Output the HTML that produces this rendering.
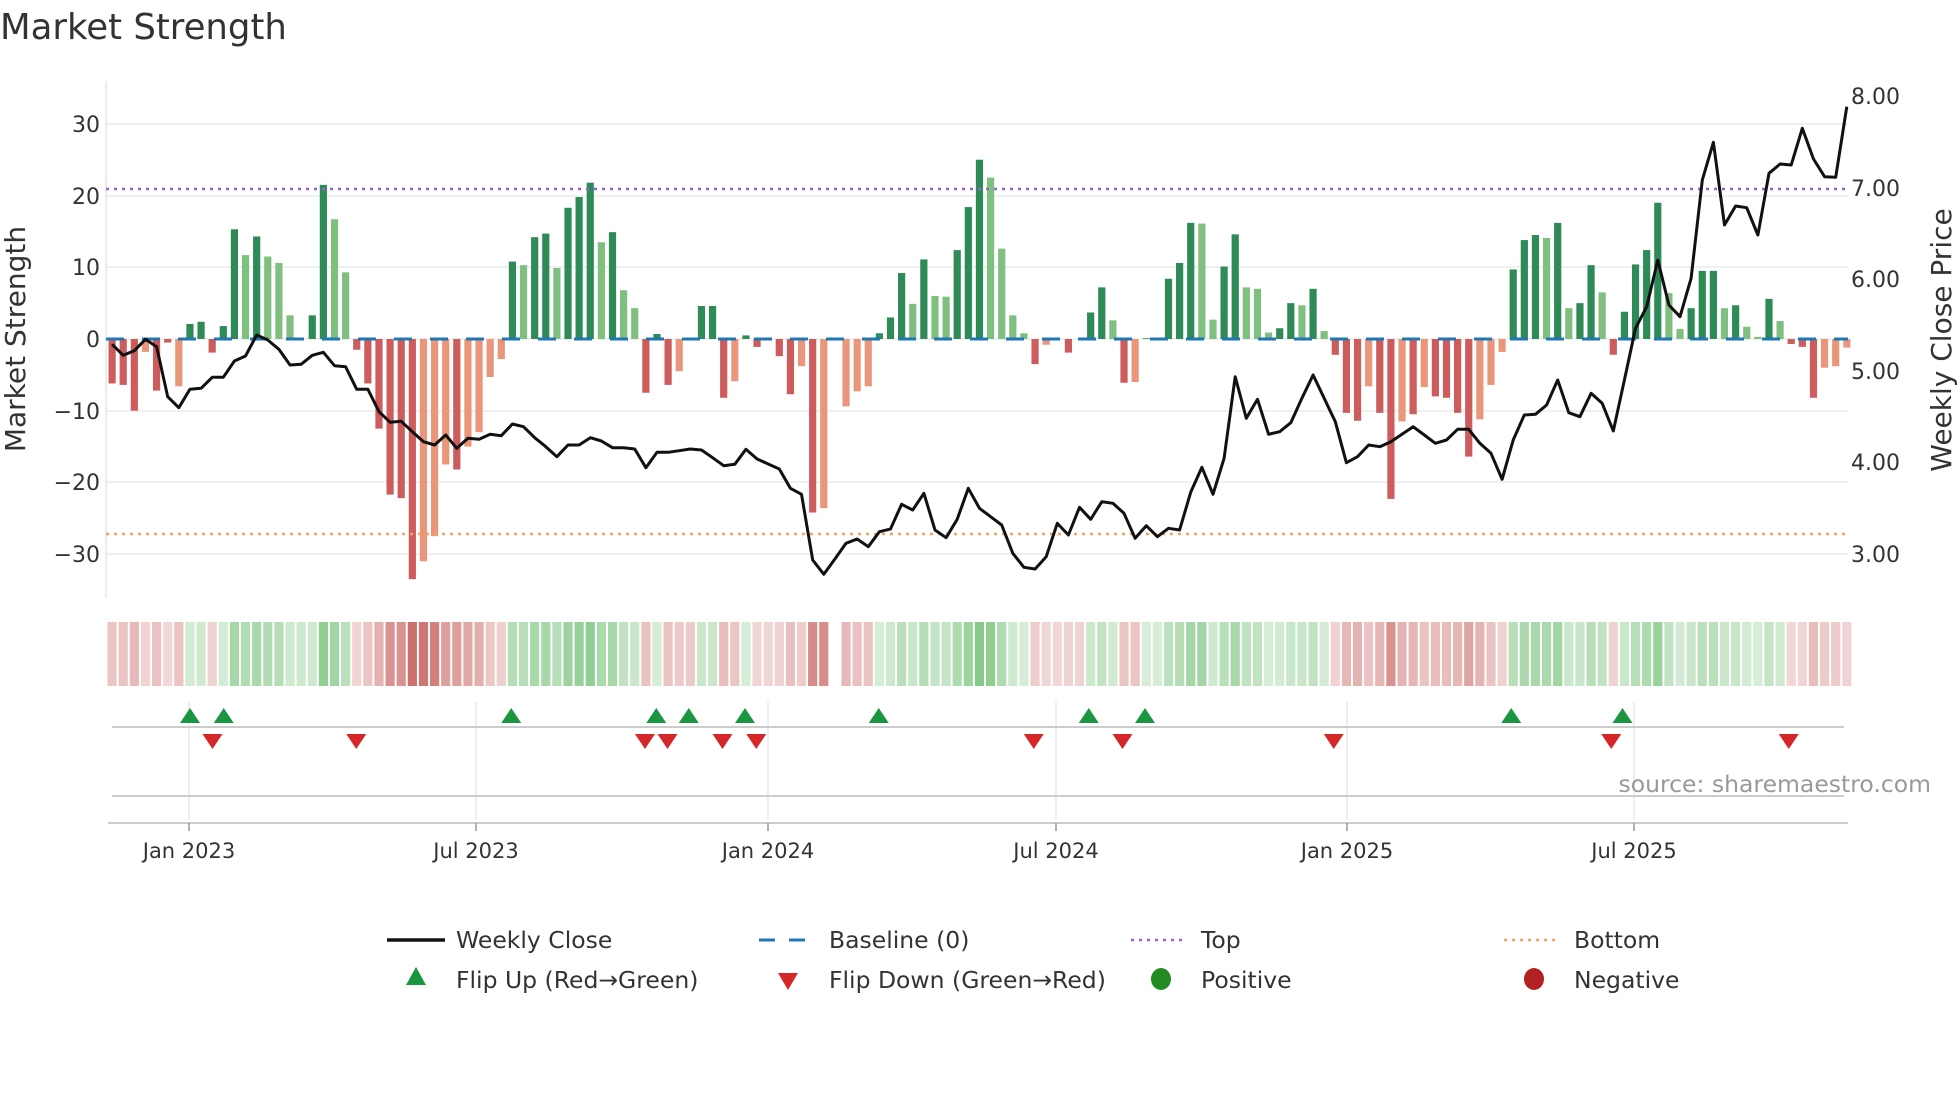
<!DOCTYPE html>
<html><head><meta charset="utf-8"><style>
html,body{margin:0;padding:0;background:#fff;width:1960px;height:1102px;overflow:hidden}
svg{display:block;font-family:"DejaVu Sans","Liberation Sans",sans-serif}
</style></head><body>
<svg id="s" width="1960" height="1102" viewBox="0 0 1960 1102" xmlns="http://www.w3.org/2000/svg">
<text x="0" y="39" font-size="35.5" fill="#333">Market Strength</text>
<g id="grid" stroke="#ececec" stroke-width="1.5">
<line x1="106" x2="1848" y1="124" y2="124"/><line x1="106" x2="1848" y1="196" y2="196"/><line x1="106" x2="1848" y1="267" y2="267"/><line x1="106" x2="1848" y1="339" y2="339"/><line x1="106" x2="1848" y1="411" y2="411"/><line x1="106" x2="1848" y1="482" y2="482"/><line x1="106" x2="1848" y1="554" y2="554"/>
</g>
<line x1="106" x2="106" y1="81" y2="598" stroke="#e6e6e6" stroke-width="1.5"/>
<g font-size="22" fill="#333" text-anchor="end">
<text x="100" y="132">30</text><text x="100" y="204">20</text><text x="100" y="275">10</text><text x="100" y="347">0</text><text x="100" y="419">−10</text><text x="100" y="490">−20</text><text x="100" y="562">−30</text>
</g>
<g font-size="22" fill="#333">
<text x="1851" y="104">8.00</text><text x="1851" y="196">7.00</text><text x="1851" y="287">6.00</text><text x="1851" y="379">5.00</text><text x="1851" y="470">4.00</text><text x="1851" y="562">3.00</text>
</g>
<text transform="translate(25,339) rotate(-90)" font-size="28" fill="#333" text-anchor="middle">Market Strength</text>
<text transform="translate(1951,340) rotate(-90)" font-size="28" fill="#333" text-anchor="middle">Weekly Close Price</text>
<g id="bars"></g>
<line x1="106" x2="1848" y1="339" y2="339" stroke="#1f77b4" stroke-width="3" stroke-dasharray="18 18"/>
<line x1="106" x2="1848" y1="189" y2="189" stroke="#9b5fd6" stroke-width="2.5" stroke-dasharray="3 5"/>
<line x1="106" x2="1848" y1="534" y2="534" stroke="#f4a460" stroke-width="2.5" stroke-dasharray="3 5"/>
<polyline id="price" fill="none" stroke="#111" stroke-width="3" stroke-linejoin="round"/>
<g id="strip"></g>
<g stroke="#e8e8ee" stroke-width="1.5">
<line x1="189" x2="189" y1="702" y2="820"/><line x1="476" x2="476" y1="702" y2="820"/><line x1="768" x2="768" y1="702" y2="820"/><line x1="1056" x2="1056" y1="702" y2="820"/><line x1="1347" x2="1347" y1="702" y2="820"/><line x1="1634" x2="1634" y1="702" y2="820"/>
</g>
<line x1="112" x2="1844" y1="727" y2="727" stroke="#ccc" stroke-width="2"/>
<line x1="112" x2="1844" y1="796" y2="796" stroke="#ccc" stroke-width="2"/>
<line x1="108" x2="1848" y1="823" y2="823" stroke="#ccc" stroke-width="2"/>
<g stroke="#999" stroke-width="1.5">
<line x1="189" x2="189" y1="823" y2="831"/><line x1="476" x2="476" y1="823" y2="831"/><line x1="768" x2="768" y1="823" y2="831"/><line x1="1056" x2="1056" y1="823" y2="831"/><line x1="1347" x2="1347" y1="823" y2="831"/><line x1="1634" x2="1634" y1="823" y2="831"/>
</g>
<g id="marks"></g>
<text x="1931" y="792" font-size="23.5" fill="#999" text-anchor="end">source: sharemaestro.com</text>
<g font-size="21" fill="#333" text-anchor="middle">
<text x="189" y="858">Jan 2023</text><text x="476" y="858">Jul 2023</text><text x="768" y="858">Jan 2024</text><text x="1056" y="858">Jul 2024</text><text x="1347" y="858">Jan 2025</text><text x="1634" y="858">Jul 2025</text>
</g>
<g font-size="23.5" fill="#333">
<line x1="387" x2="445" y1="940" y2="940" stroke="#111" stroke-width="3.5"/>
<text x="456" y="948">Weekly Close</text>
<line x1="759" x2="813" y1="940" y2="940" stroke="#1f77b4" stroke-width="3" stroke-dasharray="16 14"/>
<text x="829" y="948">Baseline (0)</text>
<line x1="1131" x2="1185" y1="940" y2="940" stroke="#9b5fd6" stroke-width="2.5" stroke-dasharray="3 5"/>
<text x="1201" y="948">Top</text>
<line x1="1504" x2="1558" y1="940" y2="940" stroke="#f4a460" stroke-width="2.5" stroke-dasharray="3 5"/>
<text x="1574" y="948">Bottom</text>
<polygon points="416,967 406,985 426,985" fill="#1a9641"/>
<text x="456" y="988">Flip Up (Red→Green)</text>
<polygon points="778,973 798,973 788,990" fill="#d62728"/>
<text x="829" y="988">Flip Down (Green→Red)</text>
<ellipse cx="1161" cy="979" rx="10" ry="11" fill="#228b22"/>
<text x="1201" y="988">Positive</text>
<ellipse cx="1534" cy="979" rx="10" ry="11" fill="#b22222"/>
<text x="1574" y="988">Negative</text>
</g>
</svg>
<script>
var S=[-6.2,-6.4,-10,-1.8,-7.2,-0.5,-6.6,2.1,2.4,-1.9,1.8,15.3,11.7,14.3,11.5,10.6,3.3,0,3.3,21.5,16.7,9.3,-1.5,-6.2,-12.5,-21.7,-22.2,-33.5,-31,-27.5,-17.5,-18.2,-15,-13,-5.3,-2.8,10.8,10.3,14.2,14.7,9.9,18.3,19.8,21.8,13.5,14.9,6.8,4.3,-7.5,0.7,-6.4,-4.5,0,4.6,4.6,-8.2,-5.9,0.5,-1.1,0,-2.4,-7.7,-3.8,-24.2,-23.6,0,-9.4,-7.3,-6.6,0.8,3,9.2,4.9,11.1,6,5.9,12.4,18.4,25,22.5,12.6,3.3,0.8,-3.5,-0.8,0,-1.9,0,3.7,7.2,2.6,-6.1,-6,0.1,0,8.4,10.6,16.2,16.1,2.7,10.1,14.6,7.2,7,0.9,1.5,5,4.7,7,1.1,-2.2,-10.3,-11.4,-6.6,-10.3,-22.3,-11.5,-10.5,-6.7,-8,-8.2,-10.3,-16.4,-11.2,-6.4,-1.8,9.7,13.8,14.5,14.1,16.2,4.3,5,10.3,6.5,-2.2,3.8,10.4,12.4,19,6.4,1.4,4.3,9.5,9.5,4.3,4.7,1.7,0.3,5.6,2.5,-0.7,-1.1,-8.2,-4,-3.8,-1.2];
var T="RRRLRRLDDRDDLDLLLDDDLLRRRRRRLLLRLLLLDLDDLDDDLDLLRDRLDDDRLDRDRRLRLDLLLDDDLDLLDDDLLLLRLDRDDDLRLDDDDDLLDDLLLDDLDLRRRLRRLRLRRRRLLLDDDLDLDDLRDDDDLLDDDLDLLDLRRRLLL";
var P1=[793,826,812,778,800,950,983,928,925,892,892,843,828,765,780,808,855,853,826,817,857,860,928,928,995,1027,1024,1055,1085,1095,1065,1105,1075,1078,1063,1067,1032,1040,1073,1100,1130,1095,1095,1073,1083,1103,1103,1107,1163,1117,1117,1112,1107,1110,1133,1157,1153,1108,1137,1152,1167,1225,1243,1440,1483,1437,1390,1377,1400,1355,1347,1273,1290,1240,1350,1373,1318,1225,1285,1310,1335,1420,1462,1467,1430];
var P2=[1330,1420,1460,1467,1425,1330,1365,1282,1318,1265,1270,1300,1375,1337,1370,1345,1350,1237,1162,1243,1135,890,1015,958,1063,1055,1028,955,885,955,1025,1148,1130,1095,1100,1085,1063,1040,1065,1090,1080,1048,1048,1090,1120,1198,1080,1005,1003,975,900,998,1010,940,970,1053,900,745,680,540,675,710,595,300,187,435,378,383,465,280,252,255,145,237,290,292,80];
var ns="http://www.w3.org/2000/svg";
function el(t,a,p){var e=document.createElementNS(ns,t);for(var k in a)e.setAttribute(k,a[k]);p.appendChild(e);return e;}
var bars=document.getElementById('bars'),strip=document.getElementById('strip');
var col={D:'#2e8b57',L:'#7fbf7f',R:'#cd5c5c'};
for(var i=0;i<S.length;i++){
 var x=112.1+11.12*i,v=S[i],c;
 if(v<0)c=(T[i]=='L')?'#e9967a':'#cd5c5c';else c=col[T[i]]||'#2e8b57';
 if(v!=0){var h=Math.abs(v)*7.17;el('rect',{x:x-3.6,y:v>0?339-h:339,width:7.2,height:h,fill:c},bars);}
 if(i!=65){var vv=v;if(vv==0)vv=S[i-1]||0.5;var a=0.22+0.6*Math.min(Math.abs(vv),33)/33;
 el('rect',{x:x-4.6,y:622,width:9.2,height:64,fill:vv>=0?'#4caf50':'#c0504d','fill-opacity':a},strip);}
}
var pts=[];
for(var i=0;i<=84;i++)pts.push((112.1+11.12*i).toFixed(1)+','+(80+P1[i]/3).toFixed(1));
var n=P2.length-1;
for(var j=5;j<=n;j++){var ii=80+j*76/n;pts.push((112.1+11.12*ii).toFixed(1)+','+(80+P2[j]/3).toFixed(1));}
document.getElementById('price').setAttribute('points',pts.join(' '));
var m=document.getElementById('marks');
[152,179,409,525,551,596,703,871,916,1209,1298].forEach(function(d){var x=d*1.25;el('polygon',{points:(x)+',708 '+(x-10)+',723 '+(x+10)+',723',fill:'#1a9641'},m);});
[170,285,516,534,578,605,827,898,1067,1289,1431].forEach(function(d){var x=d*1.25;el('polygon',{points:(x-10)+',734 '+(x+10)+',734 '+x+',749',fill:'#d62728'},m);});
</script>
</body></html>
